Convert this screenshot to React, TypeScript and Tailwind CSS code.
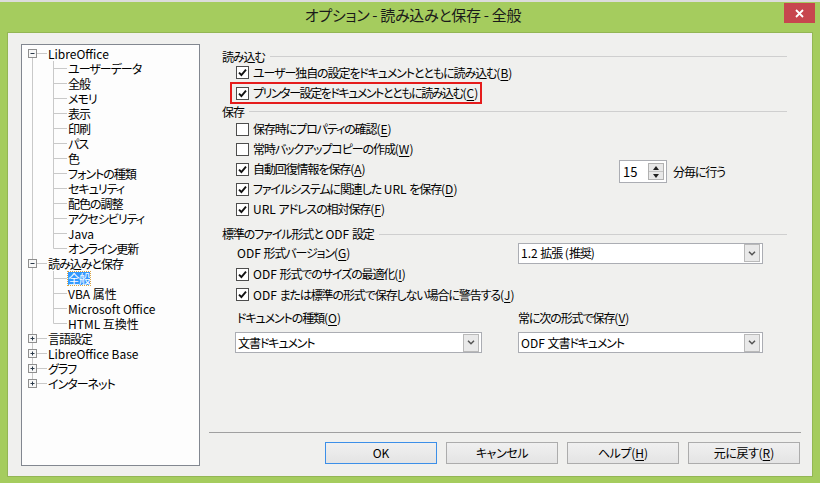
import type { ReactNode } from 'react';

const FONT = "font-['Noto_Sans_CJK_JP','Noto_Sans',sans-serif] [font-feature-settings:'palt']";

type TreeItem = {
  label: string;
  level: 0 | 1;
  exp?: '+' | '-';
  last?: boolean;
  selected?: boolean;
};

const TREE: TreeItem[] = [
  { label: 'LibreOffice', level: 0, exp: '-' },
  { label: 'ユーザーデータ', level: 1 },
  { label: '全般', level: 1 },
  { label: 'メモリ', level: 1 },
  { label: '表示', level: 1 },
  { label: '印刷', level: 1 },
  { label: 'パス', level: 1 },
  { label: '色', level: 1 },
  { label: 'フォントの種類', level: 1 },
  { label: 'セキュリティ', level: 1 },
  { label: '配色の調整', level: 1 },
  { label: 'アクセシビリティ', level: 1 },
  { label: 'Java', level: 1 },
  { label: 'オンライン更新', level: 1, last: true },
  { label: '読み込みと保存', level: 0, exp: '-' },
  { label: '全般', level: 1, selected: true },
  { label: 'VBA 属性', level: 1 },
  { label: 'Microsoft Office', level: 1 },
  { label: 'HTML 互換性', level: 1, last: true },
  { label: '言語設定', level: 0, exp: '+' },
  { label: 'LibreOffice Base', level: 0, exp: '+' },
  { label: 'グラフ', level: 0, exp: '+' },
  { label: 'インターネット', level: 0, exp: '+' },
];

const LINE = '#c9c9c9';

function TreeRow({ item, first, lastTop }: { item: TreeItem; first: boolean; lastTop: boolean }) {
  const w = item.level === 0 ? 26 : 46;
  const latin = /[A-Za-z]/.test(item.label);
  return (
    <div className="flex h-[15px] leading-[15px] items-center whitespace-nowrap">
      <svg width={w} height={15} className="shrink-0">
        {item.level === 0 ? (
          <>
            {!first && <line x1={10.5} y1={0} x2={10.5} y2={3} stroke={LINE} />}
            {!lastTop && <line x1={10.5} y1={12} x2={10.5} y2={15} stroke={LINE} />}
            <line x1={15} y1={7.5} x2={25} y2={7.5} stroke={LINE} />
            <rect x={6.5} y={3.5} width={8} height={8} fill="#f7f7f7" stroke="#8f8f8f" />
            <line x1={8.5} y1={7.5} x2={12.5} y2={7.5} stroke="#2b3a4a" />
            {item.exp === '+' && <line x1={10.5} y1={5.5} x2={10.5} y2={9.5} stroke="#2b3a4a" />}
          </>
        ) : (
          <>
            <line x1={10.5} y1={0} x2={10.5} y2={15} stroke={LINE} />
            <line x1={31.5} y1={0} x2={31.5} y2={item.last ? 7.5 : 15} stroke={LINE} />
            <line x1={31.5} y1={7.5} x2={45} y2={7.5} stroke={LINE} />
          </>
        )}
      </svg>
      <span
        className={`inline-block overflow-visible ${latin ? '' : 'tracking-[-1px]'} ${
          item.selected
            ? 'h-[13px] bg-[#3399ff] text-white leading-[13px] outline-1 outline-dotted outline-[#d9a441]'
            : 'h-[15px] leading-[15px] text-black'
        }`}
      >
        {item.label}
      </span>
    </div>
  );
}

function Tree() {
  const lastTopIndex = TREE.map((t) => t.level).lastIndexOf(0);
  return (
    <div className="w-[179px] h-[422px] shrink-0 border border-[#828790] bg-[#fdfdfd] pt-[1px] text-[12px]">
      {TREE.map((item, i) => (
        <TreeRow key={i} item={item} first={i === 0} lastTop={i === lastTopIndex} />
      ))}
    </div>
  );
}

// mnemonic key in parentheses, e.g. (B)
function K({ k }: { k: string }) {
  return (
    <span className="tracking-normal">
      (<span className="underline underline-offset-[2px]">{k}</span>)
    </span>
  );
}

// latin run inside CJK text, kept at normal spacing
function L({ t }: { t: string }) {
  return <span className="tracking-normal">{t}</span>;
}

function Check({ checked }: { checked?: boolean }) {
  return (
    <span className="w-[13px] h-[13px] shrink-0 border border-[#4d4d4d] bg-white flex items-center justify-center">
      {checked && (
        <svg width="9" height="9" viewBox="0 0 9 9">
          <path d="M1 4.6 L3.4 7 L8 1.6" fill="none" stroke="#111" strokeWidth="1.9" />
        </svg>
      )}
    </span>
  );
}

function CheckRow({ checked, children, className = '' }: { checked?: boolean; children: ReactNode; className?: string }) {
  return (
    <div className={`flex items-center gap-[4px] ${className}`}>
      <Check checked={checked} />
      <span className="whitespace-nowrap">{children}</span>
    </div>
  );
}

function Header({ children, className = '' }: { children: ReactNode; className?: string }) {
  return (
    <div className={`flex items-center pl-[13px] pr-[14px] ${className}`}>
      <span className="whitespace-nowrap">{children}</span>
      <div className="flex-1 ml-[5px] h-px bg-[#cfcfcf]" />
    </div>
  );
}

function Chevron() {
  return (
    <span className="w-[16px] h-[18px] mr-[2px] border border-[#b9b9b9] bg-[#e9e9e9] flex items-center justify-center">
      <svg width="8" height="5" viewBox="0 0 8 5">
        <path d="M1 0.8 L4 3.8 L7 0.8" fill="none" stroke="#555" strokeWidth="1.5" />
      </svg>
    </span>
  );
}

function Select({ children, width }: { children: ReactNode; width: string }) {
  return (
    <div className={`${width} h-[21px] border border-[#abadb3] bg-white flex items-center pl-[2px]`}>
      <span className="flex-1 whitespace-nowrap">{children}</span>
      <Chevron />
    </div>
  );
}

function Spin() {
  return (
    <div className="flex items-center mt-[5px]">
      <div className="w-[48px] h-[23px] border border-[#abadb3] bg-white flex items-center pl-[3px] text-[13px] tracking-normal">
        <span className="flex-1">15</span>
        <div className="w-[16px] h-[17px] mr-[2px] border border-[#b1b1b1] bg-[#e8e8e8] flex flex-col">
          <div className="flex-1 flex items-center justify-center border-b border-[#c4c4c4]">
            <svg width="6" height="4" viewBox="0 0 6 4"><path d="M0 4 L3 0 L6 4 Z" fill="#222" /></svg>
          </div>
          <div className="flex-1 flex items-center justify-center">
            <svg width="6" height="4" viewBox="0 0 6 4"><path d="M0 0 L3 4 L6 0 Z" fill="#222" /></svg>
          </div>
        </div>
      </div>
      <span className="ml-[6px] whitespace-nowrap">分毎に行う</span>
    </div>
  );
}

function Button({ children, primary }: { children: ReactNode; primary?: boolean }) {
  return (
    <div
      className={`w-[112px] h-[22px] flex items-center justify-center bg-gradient-to-b from-[#f0f0f0] to-[#e4e4e4] border ${
        primary ? 'border-[#3c8fe8]' : 'border-[#acacac]'
      }`}
    >
      {children}
    </div>
  );
}

function Options() {
  return (
    <div className="ml-[9px] w-[592px] h-[422px] flex flex-col text-[12px] text-black tracking-[-1.1px]">
      <Header className="mt-[5px] h-[15px]">読み込む</Header>
      <CheckRow checked className="h-[17px] pl-[27px]">
        ユーザー独自の設定をドキュメントとともに読み込む<K k="B" />
      </CheckRow>
      <div className="mt-[1px] ml-[21px] w-[252px] h-[22px] border-2 border-[#e51c1c] pl-[4px] flex items-center">
        <CheckRow checked className="tracking-[-1.45px]">
          プリンター設定をドキュメントとともに読み込む<K k="C" />
        </CheckRow>
      </div>
      <Header className="h-[15px]">保存</Header>
      <CheckRow className="h-[20px] pl-[27px]">
        保存時にプロパティの確認<K k="E" />
      </CheckRow>
      <CheckRow className="h-[20px] pl-[27px]">
        常時バックアップコピーの作成<K k="W" />
      </CheckRow>
      <div className="h-[20px] pl-[27px] flex items-center">
        <CheckRow checked className="w-[383px]">
          自動回復情報を保存<K k="A" />
        </CheckRow>
        <Spin />
      </div>
      <CheckRow checked className="h-[20px] pl-[27px]">
        ファイルシステムに関連した<L t=" URL " />を保存<K k="D" />
      </CheckRow>
      <CheckRow checked className="h-[20px] pl-[27px]">
        <L t="URL " />アドレスの相対保存<K k="F" />
      </CheckRow>
      <Header className="mt-[7px] h-[16px]">
        標準のファイル形式と<L t=" ODF " />設定
      </Header>
      <div className="h-[22px] flex items-center pl-[28px]">
        <span className="w-[281px] whitespace-nowrap">
          <L t="ODF " />形式バージョン<K k="G" />
        </span>
        <Select width="w-[245px]">
          <L t="1.2 " />拡張<L t=" (" />推奨<L t=")" />
        </Select>
      </div>
      <CheckRow checked className="h-[20px] pl-[27px]">
        <L t="ODF " />形式でのサイズの最適化<K k="I" />
      </CheckRow>
      <CheckRow checked className="h-[21px] pl-[27px]">
        <L t="ODF " />または標準の形式で保存しない場合に警告する<K k="J" />
      </CheckRow>
      <div className="mt-[4px] h-[18px] flex items-center pl-[28px]">
        <span className="w-[281px] whitespace-nowrap">
          ドキュメントの種類<K k="O" />
        </span>
        <span className="whitespace-nowrap">
          常に次の形式で保存<K k="V" />
        </span>
      </div>
      <div className="mt-[5px] flex items-center pl-[26px] gap-[36px]">
        <Select width="w-[247px]">文書ドキュメント</Select>
        <Select width="w-[245px]">
          <L t="ODF " />文書ドキュメント
        </Select>
      </div>
      <div className="mt-auto h-px bg-[#a0a0a0]" />
      <div className="mt-[9px] mb-[2px] flex justify-end gap-[9px] pr-[1px] tracking-[-0.4px]">
        <Button primary>
          <L t="OK" />
        </Button>
        <Button>キャンセル</Button>
        <Button>
          ヘルプ<K k="H" />
        </Button>
        <Button>
          元に戻す<K k="R" />
        </Button>
      </div>
    </div>
  );
}

export default function App() {
  return (
    <div className={`w-[820px] h-[483px] flex flex-col bg-[#a5cc5e] ${FONT}`}>
      <div className="h-[2px] bg-[#dcdcdc]" />
      <div className="relative h-[30px] flex items-center justify-center">
        <span className="text-[15px] text-[#1a1a1a] pb-[4px] ml-[6px] tracking-[-0.3px]">オプション - 読み込みと保存 - 全般</span>
        <div className="absolute top-[1px] right-[5px] w-[31px] h-[20px] bg-[#c7464e] flex items-center justify-center">
          <svg width="9" height="9" viewBox="0 0 9 9">
            <path d="M1 1 L8 8 M8 1 L1 8" stroke="#fff" strokeWidth="1.8" />
          </svg>
        </div>
      </div>
      <div className="mx-[7px] mb-[6px] flex-1 border border-[#93b654] bg-[#f0f0ee] pl-[13px] pt-[11px] flex items-start">
        <Tree />
        <Options />
      </div>
    </div>
  );
}
